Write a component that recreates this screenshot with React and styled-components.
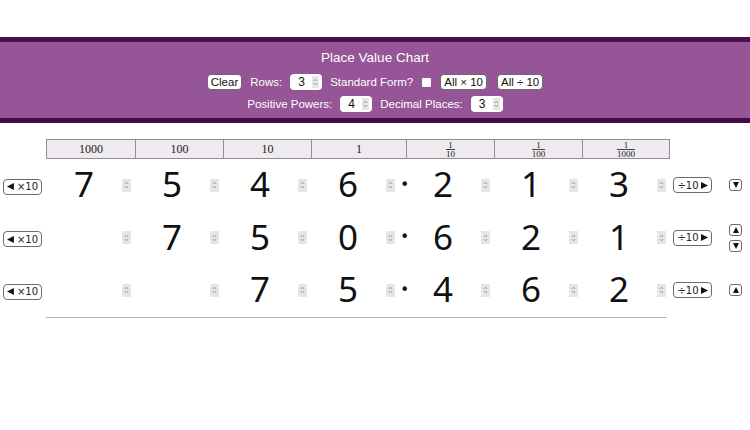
import React from 'react'
import styled, { createGlobalStyle } from 'styled-components'

const Global = createGlobalStyle`
  body {
    margin: 0;
    background: #fff;
    font-family: 'Liberation Sans', Arial, sans-serif;
  }
`

const Page = styled.div`
  padding-top: 37px;
`

const Banner = styled.header`
  background: #955596;
  border-top: 5px solid #4c0e4d;
  border-bottom: 5px solid #450b45;
  padding: 8px 0 6px;
  display: flex;
  flex-direction: column;
  align-items: center;
  gap: 6px;
  color: #fff;
`

const Title = styled.h1`
  margin: 0 0 2px;
  font-size: 13.5px;
  line-height: 16px;
  font-weight: 400;
`

const Controls = styled.div`
  display: flex;
  align-items: center;
  gap: 8px;
  height: 16px;
  font-size: 11.5px;
`

const Label = styled.span`
  white-space: nowrap;
`

const Btn = styled.button`
  font-family: 'Liberation Sans', Arial, sans-serif;
  font-size: 11.5px;
  height: 16px;
  padding: 0 3px;
  background: #fff;
  color: #111;
  border: 1px solid #6b6b6b;
  border-radius: 4px;
  line-height: 14px;
  margin-left: ${(p) => p.$ml || 0}px;
`

const NumBox = styled.span`
  display: inline-flex;
  align-items: center;
  justify-content: space-between;
  width: 32px;
  height: 16px;
  box-sizing: border-box;
  background: #fff;
  color: #111;
  border-radius: 4px;
  padding: 0 3px 0 8px;
  font-size: 12px;
`

const Check = styled.span`
  width: 9px;
  height: 9px;
  background: #fff;
  border-radius: 1px;
  margin: 0 1px;
`

const SpinBox = styled.span`
  display: inline-flex;
  align-items: center;
  justify-content: center;
  width: ${(p) => p.$w || 9}px;
  height: ${(p) => p.$h || 13}px;
  background: #e6e6e6;
  flex: none;
`

function Spin({ w, h }) {
  return (
    <SpinBox $w={w} $h={h}>
      <svg width="5" height="8" viewBox="0 0 5 8">
        <path d="M0.8 3 L2.5 1.2 L4.2 3 M0.8 5 L2.5 6.8 L4.2 5" fill="none" stroke="#8c8c8c" strokeWidth="0.9" />
      </svg>
    </SpinBox>
  )
}

const Chart = styled.section`
  margin-top: 16px;
`

const COLS = '88px 88px 88px 95px 88px 88px 87px'

const HeadRow = styled.div`
  display: grid;
  grid-template-columns: ${COLS};
  margin-left: 46px;
  width: max-content;
  border: 1px solid #8f8f8f;
  background: #eeeaf0;
  box-sizing: border-box;
`

const HeadCell = styled.div`
  height: 18px;
  display: flex;
  align-items: center;
  justify-content: center;
  border-left: ${(p) => (p.$first ? 'none' : '1px solid #8f8f8f')};
  font-family: 'Liberation Serif', 'Times New Roman', serif;
  font-size: 12px;
  color: #222;
`

const Frac = styled.span`
  display: inline-flex;
  flex-direction: column;
  align-items: center;
  font-size: 9px;
  line-height: 8px;
  & > span:first-child {
    border-bottom: 1px solid #444;
    padding: 0 1px;
    align-self: stretch;
    text-align: center;
  }
`

const Row = styled.div`
  display: flex;
  align-items: center;
  height: 52.5px;
`

const SideLeft = styled.div`
  width: 46px;
  padding-left: 3px;
  box-sizing: border-box;
`

const Cells = styled.div`
  display: grid;
  grid-template-columns: ${COLS};
  height: 100%;
`

const Cell = styled.div`
  display: flex;
  align-items: center;
`

const Digit = styled.span`
  width: 76px;
  text-align: center;
  font-family: 'Noto Sans', 'Open Sans', sans-serif;
  font-size: 35px;
  line-height: 40px;
  color: #111;
  padding-bottom: 2px;
`

const Point = styled.span`
  flex: none;
  width: 10px;
  display: flex;
  justify-content: flex-end;
  font-family: 'DejaVu Sans', sans-serif;
  font-size: 15px;
  line-height: 15px;
  color: #111;
  & > span {
    margin-right: -4px;
  }
`

const SmallBtn = styled.button`
  display: inline-flex;
  align-items: center;
  gap: ${(p) => p.$gap || 3}px;
  height: 16px;
  width: 39px;
  padding: 0 3px;
  justify-content: center;
  background: #fff;
  border: 1px solid #6b6b6b;
  border-radius: 4px;
  font-family: 'DejaVu Sans', sans-serif;
  font-size: 10px;
  color: #222;
`

const SideRight = styled.div`
  display: flex;
  align-items: center;
  padding-left: 5px;
  gap: 17px;
`

const Arrows = styled.div`
  display: flex;
  flex-direction: column;
  gap: 4px;
  width: 13px;
`

const ArrowBtn = styled.button`
  width: 13px;
  height: 12px;
  padding: 0;
  display: flex;
  align-items: center;
  justify-content: center;
  background: #fff;
  border: 1px solid #6b6b6b;
  border-radius: 3px;
`

const Rule = styled.div`
  margin-left: 46px;
  width: 621px;
  border-top: 1px solid #b3b3b3;
`

function Tri({ dir, size = 7 }) {
  const d = {
    left: 'M6 0 L6 6 L0 3 Z',
    right: 'M0 0 L0 6 L6 3 Z',
    up: 'M0 6 L6 6 L3 0 Z',
    down: 'M0 0 L6 0 L3 6 Z',
  }[dir]
  return (
    <svg width={size} height={size} viewBox="0 0 6 6">
      <path d={d} fill="#111" />
    </svg>
  )
}

const headers = ['1000', '100', '10', '1', '10', '100', '1000']

const rows = [
  { digits: ['7', '5', '4', '6', '2', '1', '3'], up: false, down: true },
  { digits: ['', '7', '5', '0', '6', '2', '1'], up: true, down: true },
  { digits: ['', '', '7', '5', '4', '6', '2'], up: true, down: false },
]

function DigitRow({ digits, up, down }) {
  return (
    <Row>
      <SideLeft>
        <SmallBtn>
          <Tri dir="left" />
          <span>×10</span>
        </SmallBtn>
      </SideLeft>
      <Cells>
        {digits.map((d, i) => (
          <Cell key={i}>
            <Digit>{d}</Digit>
            <Spin />
            {i === 3 && (
              <Point>
                <span>•</span>
              </Point>
            )}
          </Cell>
        ))}
      </Cells>
      <SideRight>
        <SmallBtn $gap={2}>
          <span>÷10</span>
          <Tri dir="right" />
        </SmallBtn>
        <Arrows>
          {up && (
            <ArrowBtn>
              <Tri dir="up" size={6} />
            </ArrowBtn>
          )}
          {down && (
            <ArrowBtn>
              <Tri dir="down" size={6} />
            </ArrowBtn>
          )}
        </Arrows>
      </SideRight>
    </Row>
  )
}

export default function App() {
  return (
    <Page>
      <Global />
      <Banner>
        <Title>Place Value Chart</Title>
        <Controls>
          <Btn>Clear</Btn>
          <Label>Rows:</Label>
          <NumBox>
            3<Spin w={7} h={12} />
          </NumBox>
          <Label>Standard Form?</Label>
          <Check />
          <Btn>All × 10</Btn>
          <Btn $ml={2}>All ÷ 10</Btn>
        </Controls>
        <Controls>
          <Label>Positive Powers:</Label>
          <NumBox>
            4<Spin w={7} h={12} />
          </NumBox>
          <Label>Decimal Places:</Label>
          <NumBox>
            3<Spin w={7} h={12} />
          </NumBox>
        </Controls>
      </Banner>
      <Chart>
        <HeadRow>
          {headers.map((h, i) => (
            <HeadCell key={i} $first={i === 0}>
              {i < 4 ? (
                h
              ) : (
                <Frac>
                  <span>1</span>
                  <span>{h}</span>
                </Frac>
              )}
            </HeadCell>
          ))}
        </HeadRow>
        {rows.map((r, i) => (
          <DigitRow key={i} {...r} />
        ))}
        <Rule />
      </Chart>
    </Page>
  )
}
